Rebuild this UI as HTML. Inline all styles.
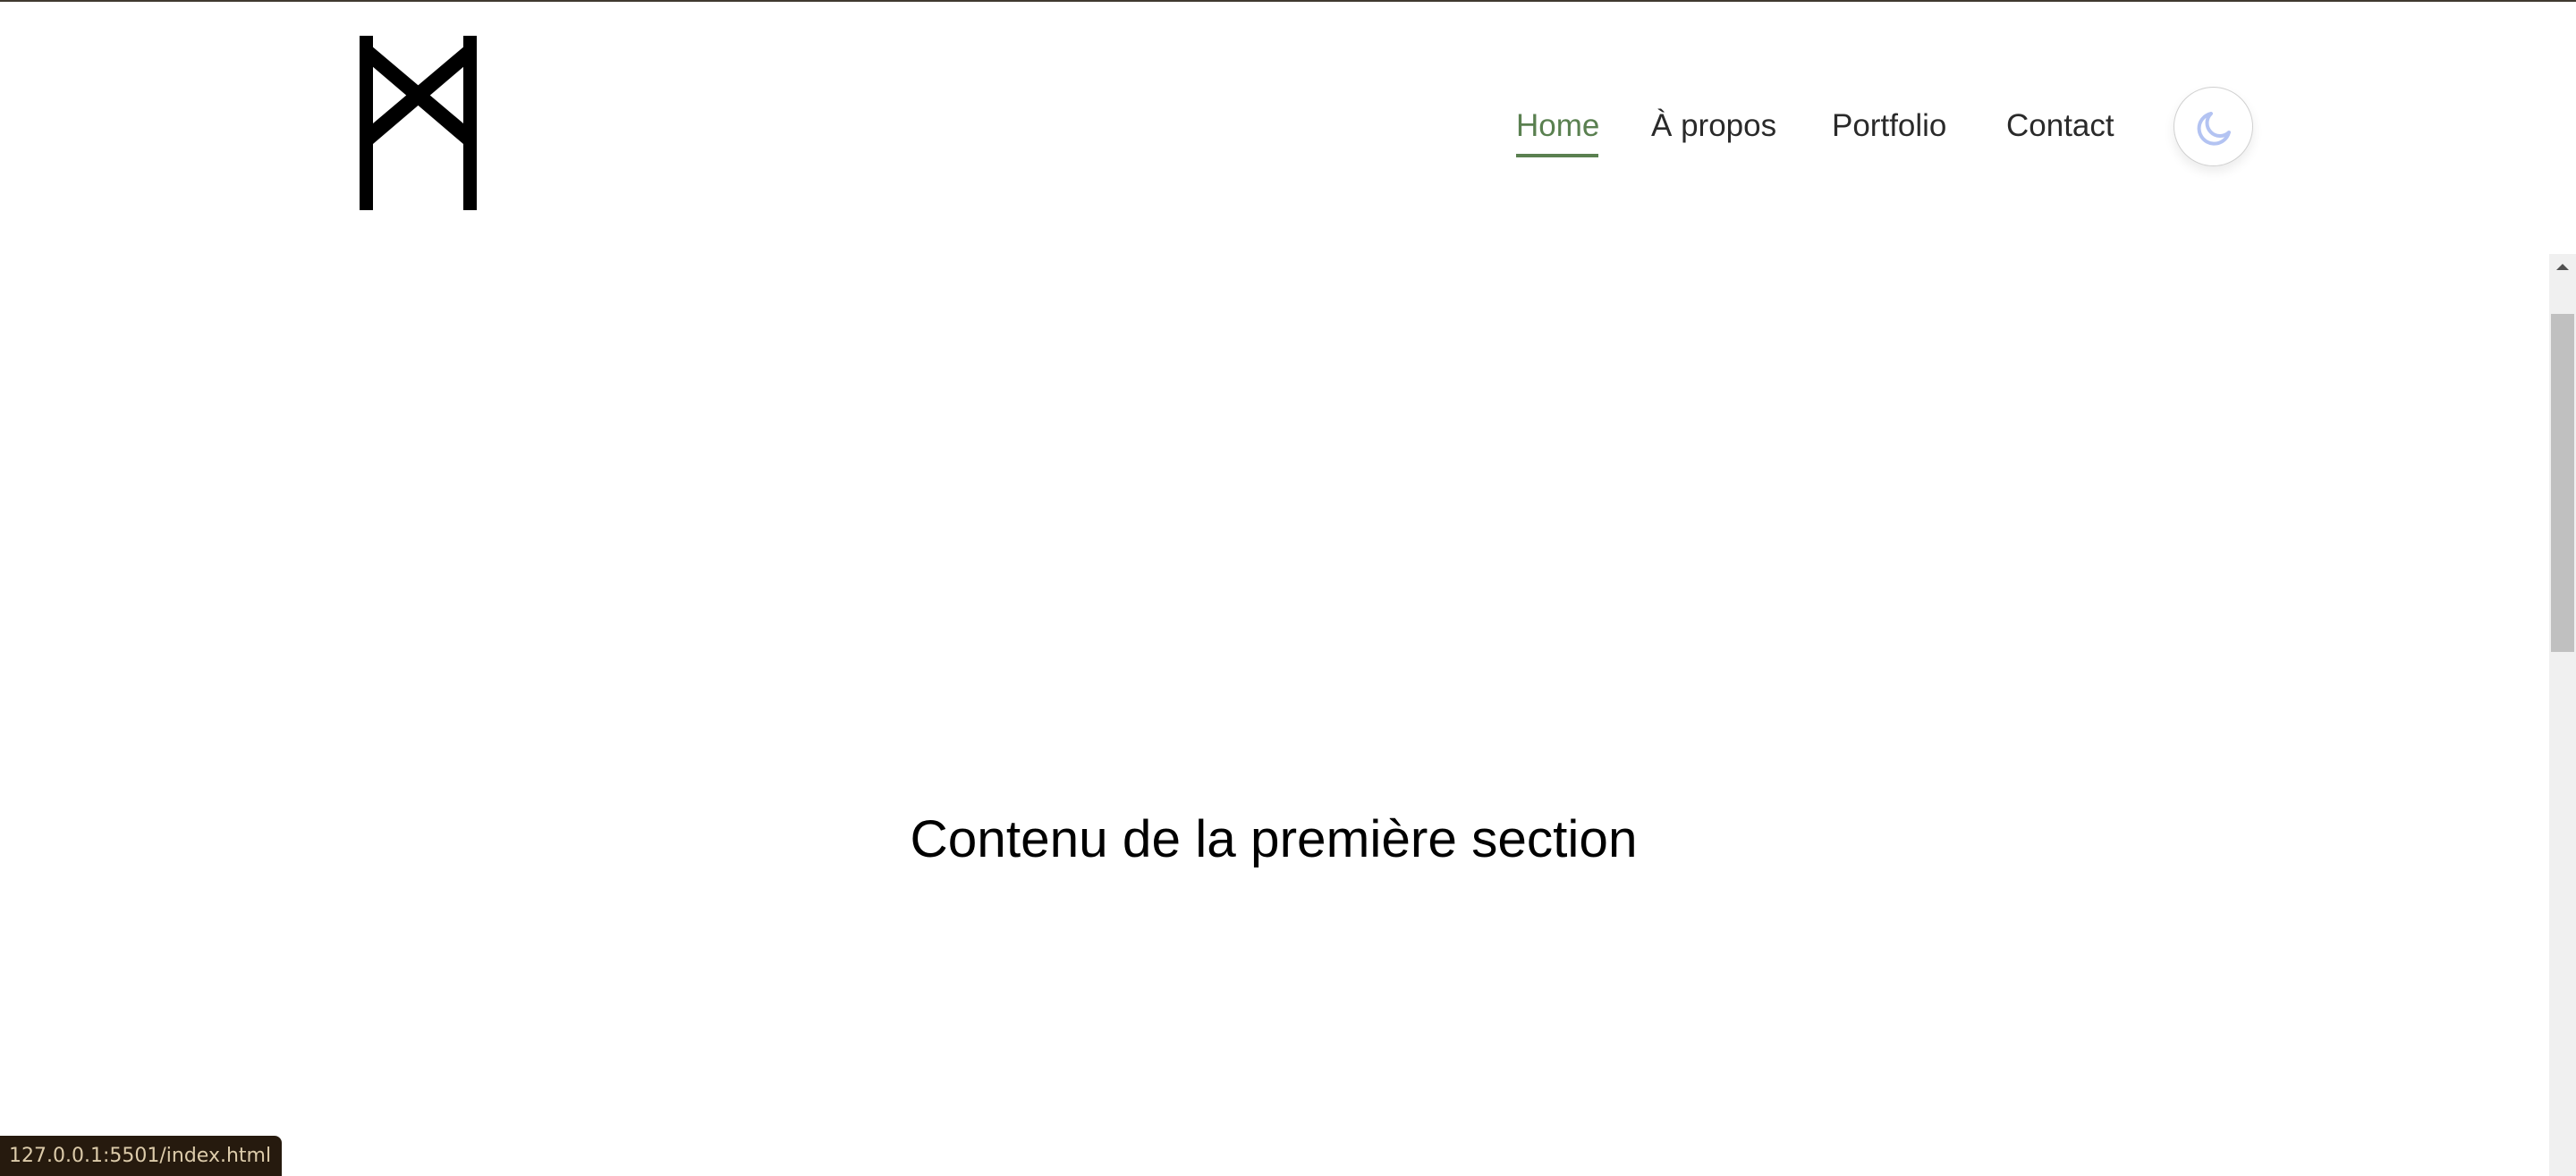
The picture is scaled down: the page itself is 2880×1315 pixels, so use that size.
<!DOCTYPE html>
<html><head><meta charset="utf-8"><style>
html,body{margin:0;padding:0;width:2880px;height:1315px;overflow:hidden;background:#fff;font-family:"Liberation Sans",sans-serif;}
.topline{position:absolute;left:0;top:0;width:2880px;height:2px;background:#403a30;}
.nav a{position:absolute;top:116px;font-size:35px;line-height:50px;color:#2a2a2a;text-decoration:none;white-space:nowrap;}
.nav a.home{color:#5a8050;}
.ul{position:absolute;left:1695px;top:172px;width:92px;height:4px;background:#5a8050;}
.btn{position:absolute;left:2430px;top:97px;width:87px;height:87px;border-radius:50%;border:1px solid #d0d0d0;background:#fff;box-shadow:0 6px 12px rgba(0,0,0,0.08);}
h1{position:absolute;left:0;width:2848px;text-align:center;top:904px;margin:0;font-weight:normal;font-size:58.5px;line-height:70px;color:#000;}
.track{position:absolute;left:2850px;top:284px;width:30px;height:1031px;background:#f0f0f0;}
.thumb{position:absolute;left:2852px;top:351px;width:26px;height:378px;background:#c0c0c0;}
.arrow{position:absolute;left:2858px;top:295px;width:0;height:0;border-left:7px solid transparent;border-right:7px solid transparent;border-bottom:7px solid #505050;}
.status{position:absolute;left:0;top:1270px;width:315px;height:45px;background:#261a0e;border-top-right-radius:8px;color:#dccbaa;font-family:"DejaVu Sans",sans-serif;font-size:22px;line-height:45px;padding-left:10px;box-sizing:border-box;white-space:nowrap;overflow:hidden;}
</style></head><body>
<div class="topline"></div>
<svg style="position:absolute;left:0;top:0" width="600" height="260">
<rect x="402" y="40" width="15" height="195" fill="#000"/>
<rect x="518" y="40" width="15" height="195" fill="#000"/>
<polygon points="402,40 518,138 518,161 402,62" fill="#000"/>
<polygon points="533,40 417,138 417,161 533,62" fill="#000"/>
</svg>
<div class="nav">
<a class="home" style="left:1695px">Home</a>
<a style="left:1846px">À propos</a>
<a style="left:2048px">Portfolio</a>
<a style="left:2243px">Contact</a>
</div>
<div class="ul"></div>
<div class="btn"><svg width="87" height="87" style="position:absolute;left:0;top:0"><path d="M41 29 A17 17 0 1 0 61 50 A13 13 0 0 1 41 29 Z" fill="none" stroke="#b3c3f2" stroke-width="4" stroke-linejoin="round"/></svg></div>
<h1>Contenu de la première section</h1>
<div class="track"></div>
<div class="thumb"></div>
<div class="arrow"></div>
<div class="status">127.0.0.1:5501/index.html</div>
</body></html>
